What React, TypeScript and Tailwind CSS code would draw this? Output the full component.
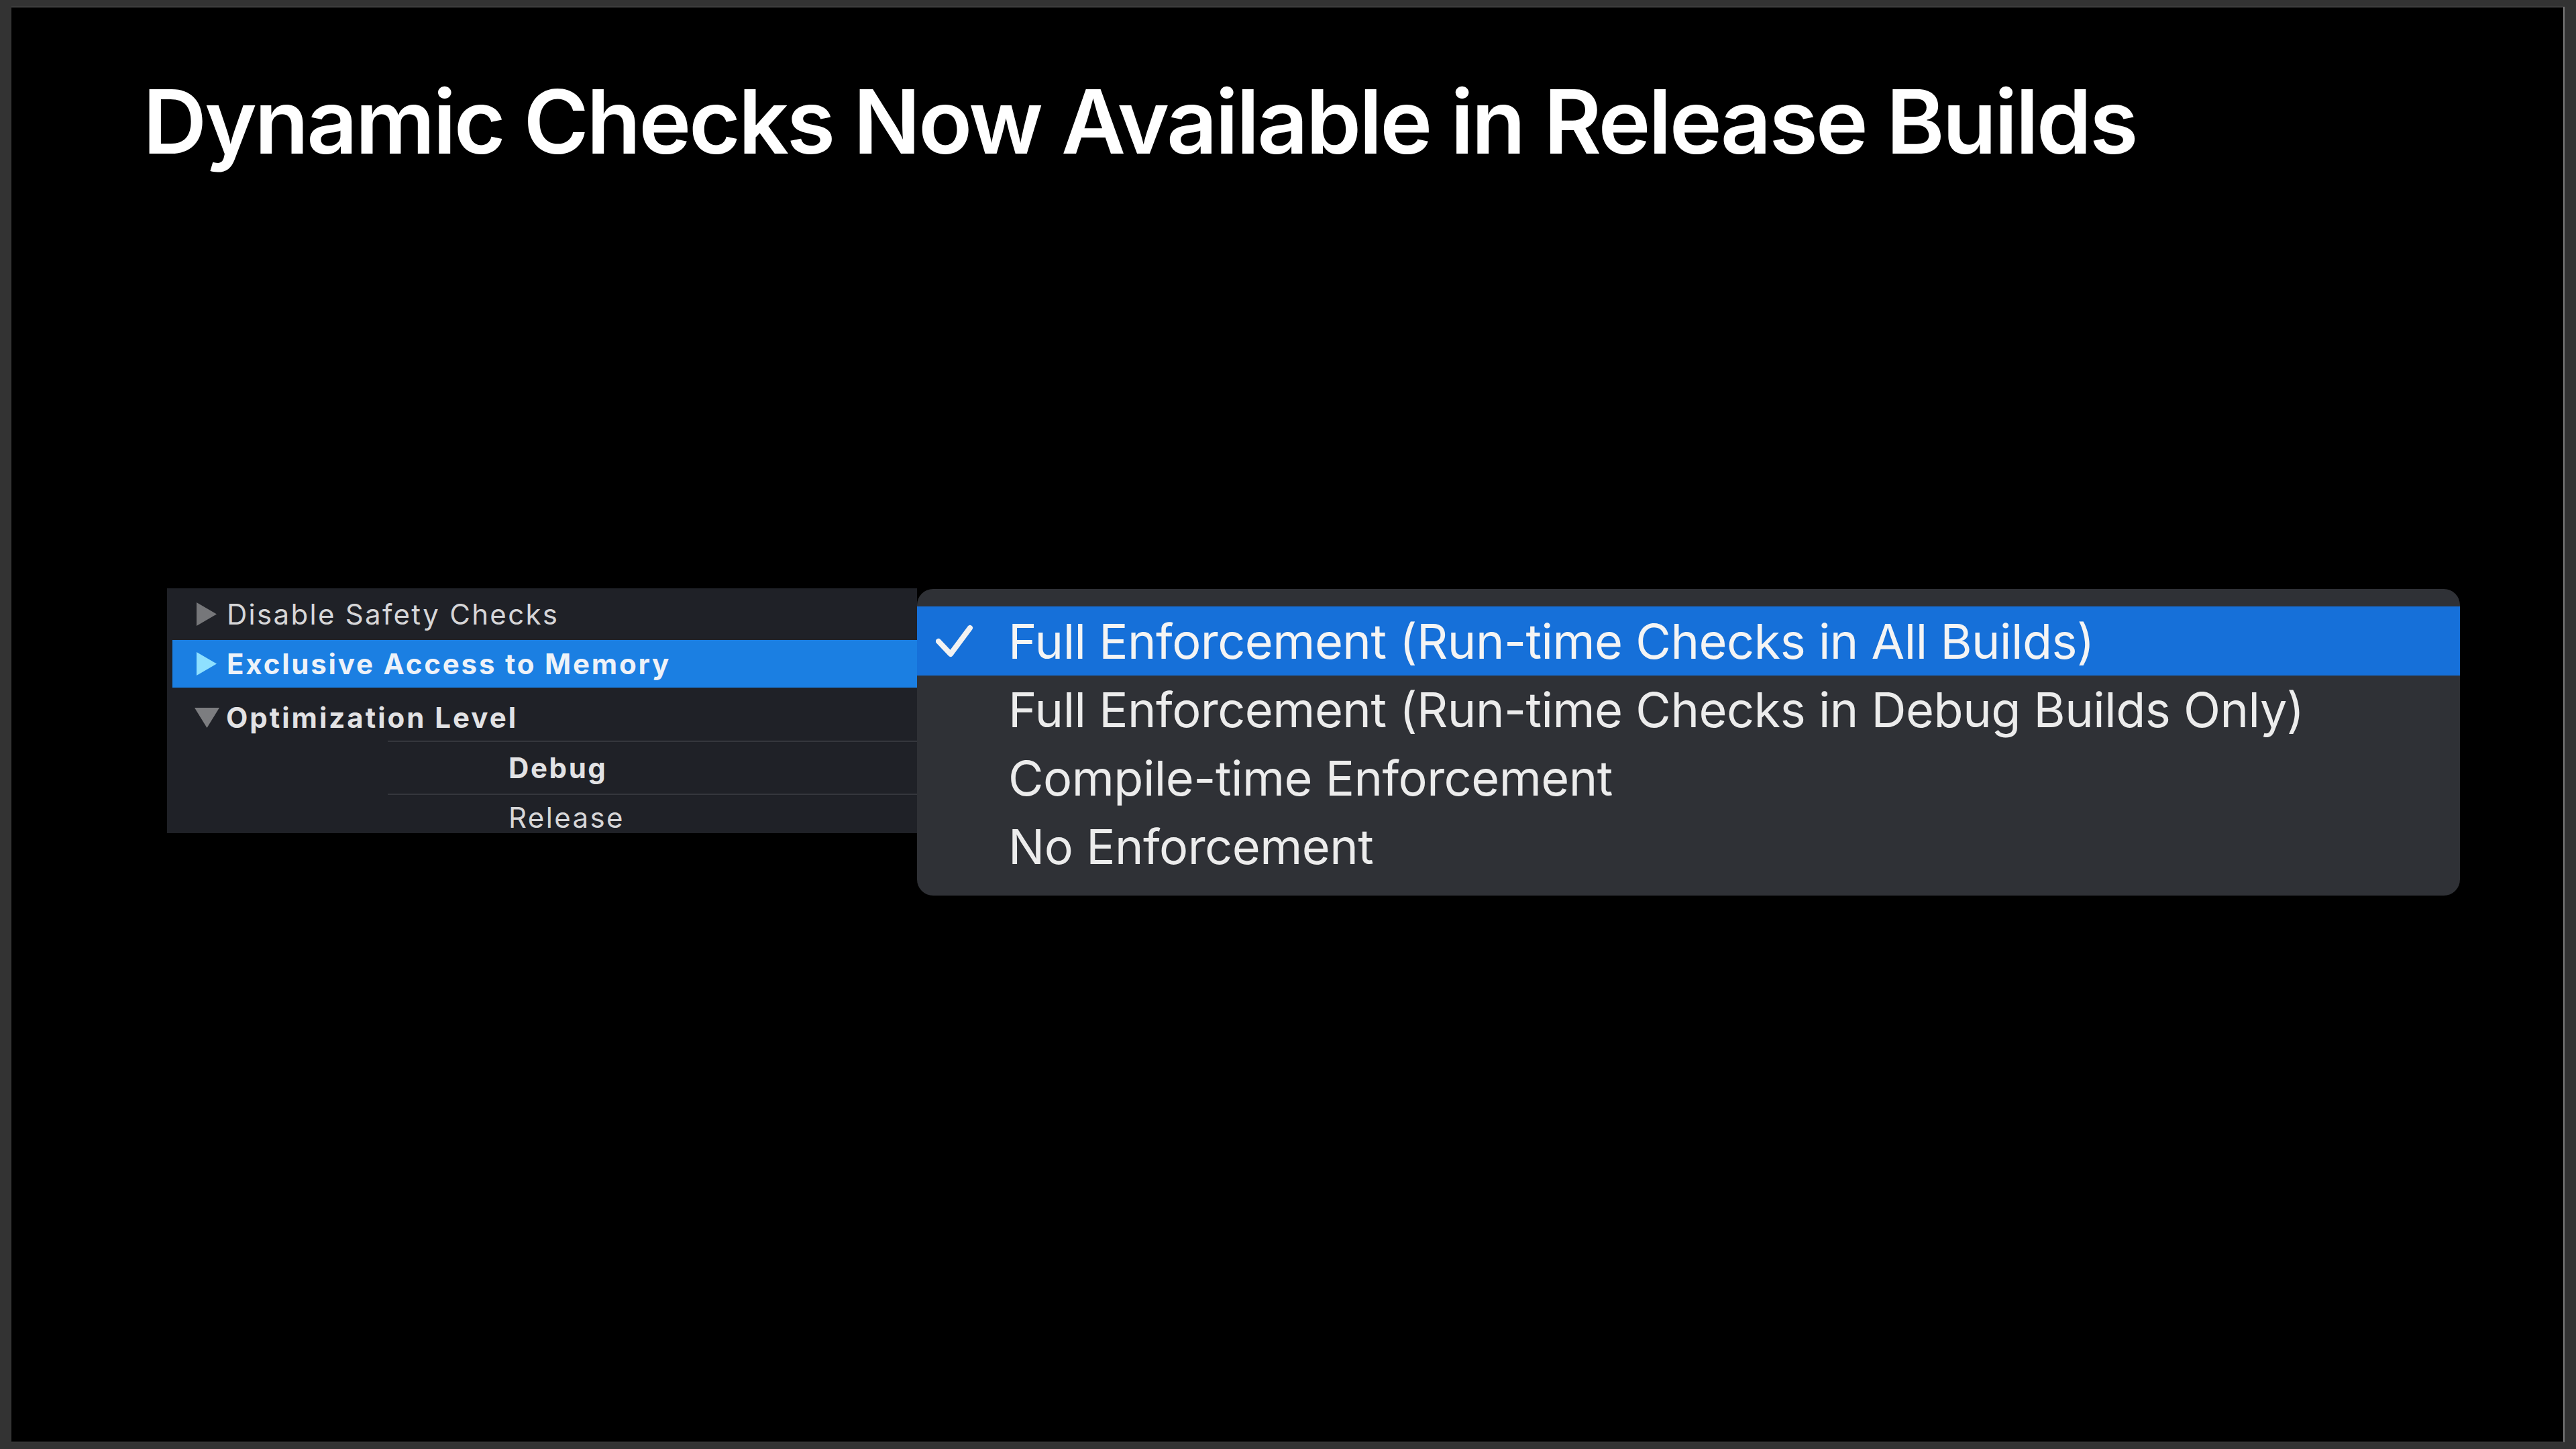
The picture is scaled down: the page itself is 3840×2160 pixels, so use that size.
import { FC } from 'react';

const RightTri: FC<{ color: string }> = ({ color }) => (
  <svg width="30" height="35" viewBox="0 0 30 35" className="shrink-0">
    <polygon points="0,0 30,17.5 0,35" fill={color} />
  </svg>
);

const DownTri: FC = () => (
  <svg width="37" height="30" viewBox="0 0 37 30" className="shrink-0">
    <polygon points="0,0 37,0 18.5,30" fill="#7c7d80" />
  </svg>
);

const Check: FC = () => (
  <svg width="56" height="50" viewBox="0 0 56 50" className="shrink-0">
    <path d="M4 25 L22 44 L51 5" fill="none" stroke="#f2f2f2" strokeWidth="8" strokeLinecap="round" strokeLinejoin="round" />
  </svg>
);

const options = [
  'Full Enforcement (Run-time Checks in All Builds)',
  'Full Enforcement (Run-time Checks in Debug Builds Only)',
  'Compile-time Enforcement',
  'No Enforcement',
];

const App: FC = () => {
  return (
    <div className="w-[3840px] h-[2160px] bg-[#333333] pl-[17px] pt-[10px] pr-[17px] pb-[10px] font-['Inter',sans-serif]">
      <div className="w-full h-full bg-black border-t border-t-[#6f6f6f] border-r-2 border-r-[#7a7a7a] border-b border-b-[#4a4a4a] overflow-hidden">
        {/* Title */}
        <h1 className="mt-[104px] pl-[196px] text-[132px] leading-none font-semibold text-white tracking-[-3.2px]">
          Dynamic Checks Now Available in Release Builds
        </h1>

        {/* Build settings + popup */}
        <div className="mt-[630px] pl-[232px] flex items-start">
          {/* Settings panel */}
          <div className="w-[1118px] h-[365px] bg-[#1f2127] text-[42px]">
            <div className="h-[77px] flex items-center pl-[44px] gap-[15px] text-[#d6d6d8] tracking-[2.3px]">
              <RightTri color="#76777a" />
              <span className="leading-[77px]">Disable Safety Checks</span>
            </div>
            <div className="ml-[8px] h-[71px] flex items-center pl-[36px] gap-[15px] bg-[#1b7fe2] text-[#eef2f8] font-bold tracking-[2.8px]">
              <RightTri color="#8ee0ff" />
              <span className="leading-[71px]">Exclusive Access to Memory</span>
            </div>
            <div className="h-[79px] pt-[10px] flex items-center pl-[41px] gap-[10px] text-[#e2e2e4] font-bold tracking-[3px]">
              <DownTri />
              <span className="leading-[69px]">Optimization Level</span>
            </div>
            <div className="ml-[329px] border-t-2 border-[#35373d] h-[79px] pl-[180px] leading-[77px] font-bold text-[#e2e2e4] tracking-[2.6px]">
              Debug
            </div>
            <div className="ml-[329px] border-t-2 border-[#35373d] h-[59px] pl-[180px] pt-[11px] leading-[46px] text-[#d6d6d8] tracking-[2.4px]">
              Release
            </div>
          </div>

          {/* Popup menu */}
          <div className="mt-[1px] w-[2300px] h-[457px] bg-[#2f3136] rounded-[24px] pt-[26px] text-[72px] text-[#ececec] tracking-[-0.5px]">
            {options.map((label, i) => (
              <div
                key={label}
                className={
                  i === 0
                    ? 'h-[103px] flex items-center bg-[#1670d9] text-[#f4f4f4]'
                    : 'h-[102px] flex items-center'
                }
              >
                <div className="w-[136px] pl-[28px] flex items-center">{i === 0 && <Check />}</div>
                <span className="leading-[102px]">{label}</span>
              </div>
            ))}
          </div>
        </div>
      </div>
    </div>
  );
};

export default App;
